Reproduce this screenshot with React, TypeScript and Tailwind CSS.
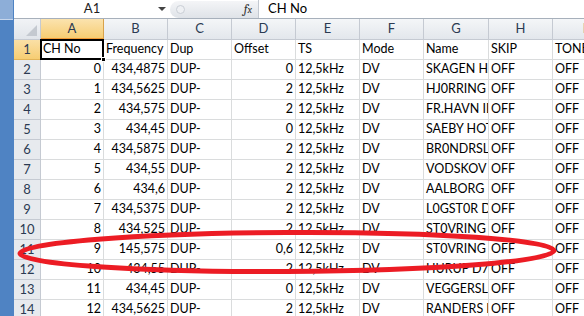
import React from "react";

const COLS = [
  { key: "A", w: "w-[63px]" },
  { key: "B", w: "w-[64px]" },
  { key: "C", w: "w-[64px]" },
  { key: "D", w: "w-[64px]" },
  { key: "E", w: "w-[64px]" },
  { key: "F", w: "w-[64px]" },
  { key: "G", w: "w-[65px]" },
  { key: "H", w: "w-[64px]" },
  { key: "I", w: "w-[64px]" },
];

// [chNo, freq, dup, offset, ts, mode, name, skip, tone]
const ROWS: string[][] = [
  ["0", "434,4875", "DUP-", "0", "12,5kHz", "DV", "SKAGEN HAVN", "OFF", "OFF"],
  ["1", "434,5625", "DUP-", "2", "12,5kHz", "DV", "HJ0RRING", "OFF", "OFF"],
  ["2", "434,575", "DUP-", "2", "12,5kHz", "DV", "FR.HAVN ID", "OFF", "OFF"],
  ["3", "434,45", "DUP-", "0", "12,5kHz", "DV", "SAEBY HOTEL", "OFF", "OFF"],
  ["4", "434,5875", "DUP-", "2", "12,5kHz", "DV", "BR0NDRSLEV", "OFF", "OFF"],
  ["5", "434,55", "DUP-", "2", "12,5kHz", "DV", "VODSKOV", "OFF", "OFF"],
  ["6", "434,6", "DUP-", "2", "12,5kHz", "DV", "AALBORG", "OFF", "OFF"],
  ["7", "434,5375", "DUP-", "2", "12,5kHz", "DV", "L0GST0R D7", "OFF", "OFF"],
  ["8", "434,525", "DUP-", "2", "12,5kHz", "DV", "ST0VRING", "OFF", "OFF"],
  ["9", "145,575", "DUP-", "0,6", "12,5kHz", "DV", "ST0VRING", "OFF", "OFF"],
  ["10", "434,55", "DUP-", "2", "12,5kHz", "DV", "HURUP D7", "OFF", "OFF"],
  ["11", "434,45", "DUP-", "0", "12,5kHz", "DV", "VEGGERSLEV", "OFF", "OFF"],
  ["12", "434,5625", "DUP-", "2", "12,5kHz", "DV", "RANDERS D7", "OFF", "OFF"],
];

const HEAD = ["CH No", "Frequency", "Dup", "Offset", "TS", "Mode", "Name", "SKIP", "TONE"];

// numeric columns are right aligned like Excel does with numbers
const NUMERIC = [true, true, false, true, false, false, false, false, false];

function FormulaBar() {
  return (
    <div className="flex h-[19px] items-center border-b border-[#a7b0bb] bg-white">
      <div className="relative flex h-full w-[156px] items-center justify-center">
        <span className="text-[13px] text-[#1e1e1e]">A1</span>
        <span className="absolute right-[4px] top-[7px] h-0 w-0 border-x-[4px] border-t-[4px] border-x-transparent border-t-[#444]" />
      </div>
      <div className="flex h-[17px] w-[88px] items-center rounded-l-full bg-gradient-to-b from-[#f4f5f7] to-[#dfe3e8] pl-[6px]">
        <span className="h-[9px] w-[9px] rounded-full border border-[#c9ced5] bg-[#eef0f3]" />
        <span className="ml-auto mr-[6px] font-serif text-[13px] italic text-[#333]">
          f<span className="text-[10px]">x</span>
        </span>
      </div>
      <div className="h-full w-px bg-[#c3c9d1]" />
      <span className="pl-[9px] text-[13px] text-black">CH No</span>
    </div>
  );
}

function ColumnHeaders() {
  return (
    <div className="flex h-[21px]">
      <div className="relative w-[27px] shrink-0 border-b border-r border-[#c5cad2] bg-gradient-to-b from-[#f1f3f6] to-[#e1e5ea]">
        <span className="absolute bottom-[3px] right-[3px] h-0 w-0 border-b-[11px] border-l-[11px] border-b-[#c4c9d0] border-l-transparent" />
      </div>
      {COLS.map((c) =>
        c.key === "A" ? (
          <div
            key={c.key}
            className={`${c.w} flex shrink-0 items-center justify-center border-b-2 border-r border-b-[#f29b36] border-r-[#d8a24a] bg-gradient-to-b from-[#fbe3ae] to-[#f6cd72] text-[13px] text-[#2b3a52]`}
          >
            {c.key}
          </div>
        ) : (
          <div
            key={c.key}
            className={`${c.w} flex shrink-0 items-center justify-center border-b border-r border-[#c5cad2] bg-gradient-to-b from-[#f4f6f8] to-[#e3e7ec] text-[13px] text-[#2b3a52]`}
          >
            {c.key}
          </div>
        ),
      )}
    </div>
  );
}

function Row({ n, cells, header }: { n: number; cells: string[]; header?: boolean }) {
  return (
    <div className="flex h-[20px]">
      <div
        className={`flex w-[27px] shrink-0 items-center justify-center border-b border-r text-[13px] ${
          header
            ? "border-[#e2b458] bg-gradient-to-b from-[#fae0a6] to-[#f6cd72] text-[#2b3a52]"
            : "border-[#c5cad2] bg-[#e7eaee] text-[#2b3a52]"
        }`}
      >
        {n}
      </div>
      {COLS.map((c, i) => {
        const right = !header && NUMERIC[i];
        const active = header && i === 0;
        return (
          <div
            key={c.key}
            className={`${c.w} relative flex shrink-0 items-center overflow-hidden whitespace-nowrap border-b border-r border-[#dadcdd] px-[2px] text-[12.5px] text-black ${
              right ? "justify-end" : "justify-start"
            } ${active ? "overflow-visible" : ""}`}
          >
            {cells[i]}
            {active && (
              <>
                <span className="pointer-events-none absolute -left-px -top-px h-[21px] w-[64px] border-2 border-black" />
                <span className="absolute -bottom-[3px] -right-[3px] z-10 h-[5px] w-[5px] border border-white bg-black" />
              </>
            )}
          </div>
        );
      })}
    </div>
  );
}

export default function App() {
  return (
    <div className="relative flex h-[316px] w-[584px] overflow-hidden bg-white font-['Lato',sans-serif]">
      <div className="flex w-[14px] shrink-0 flex-col bg-[#4f83c3]">
        <div className="mr-px h-[20px] border-b border-[#c6d6ec] bg-[#8daed8]" />
      </div>
      <div className="flex min-w-0 flex-1 flex-col">
        <FormulaBar />
        <div className="h-[3px] bg-[#e9ecf0]" />
        <ColumnHeaders />
        <Row n={1} cells={HEAD} header />
        {ROWS.map((r, i) => (
          <Row key={i} n={i + 2} cells={r} />
        ))}
      </div>
      {/* the red hand-drawn ring around row 11 */}
      <svg className="pointer-events-none absolute left-0 top-0" width="584" height="316">
        <ellipse
          cx="287"
          cy="252"
          rx="267"
          ry="19.5"
          fill="none"
          stroke="#ec1c24"
          strokeWidth="5"
          transform="rotate(-0.3 287 252)"
        />
      </svg>
    </div>
  );
}
